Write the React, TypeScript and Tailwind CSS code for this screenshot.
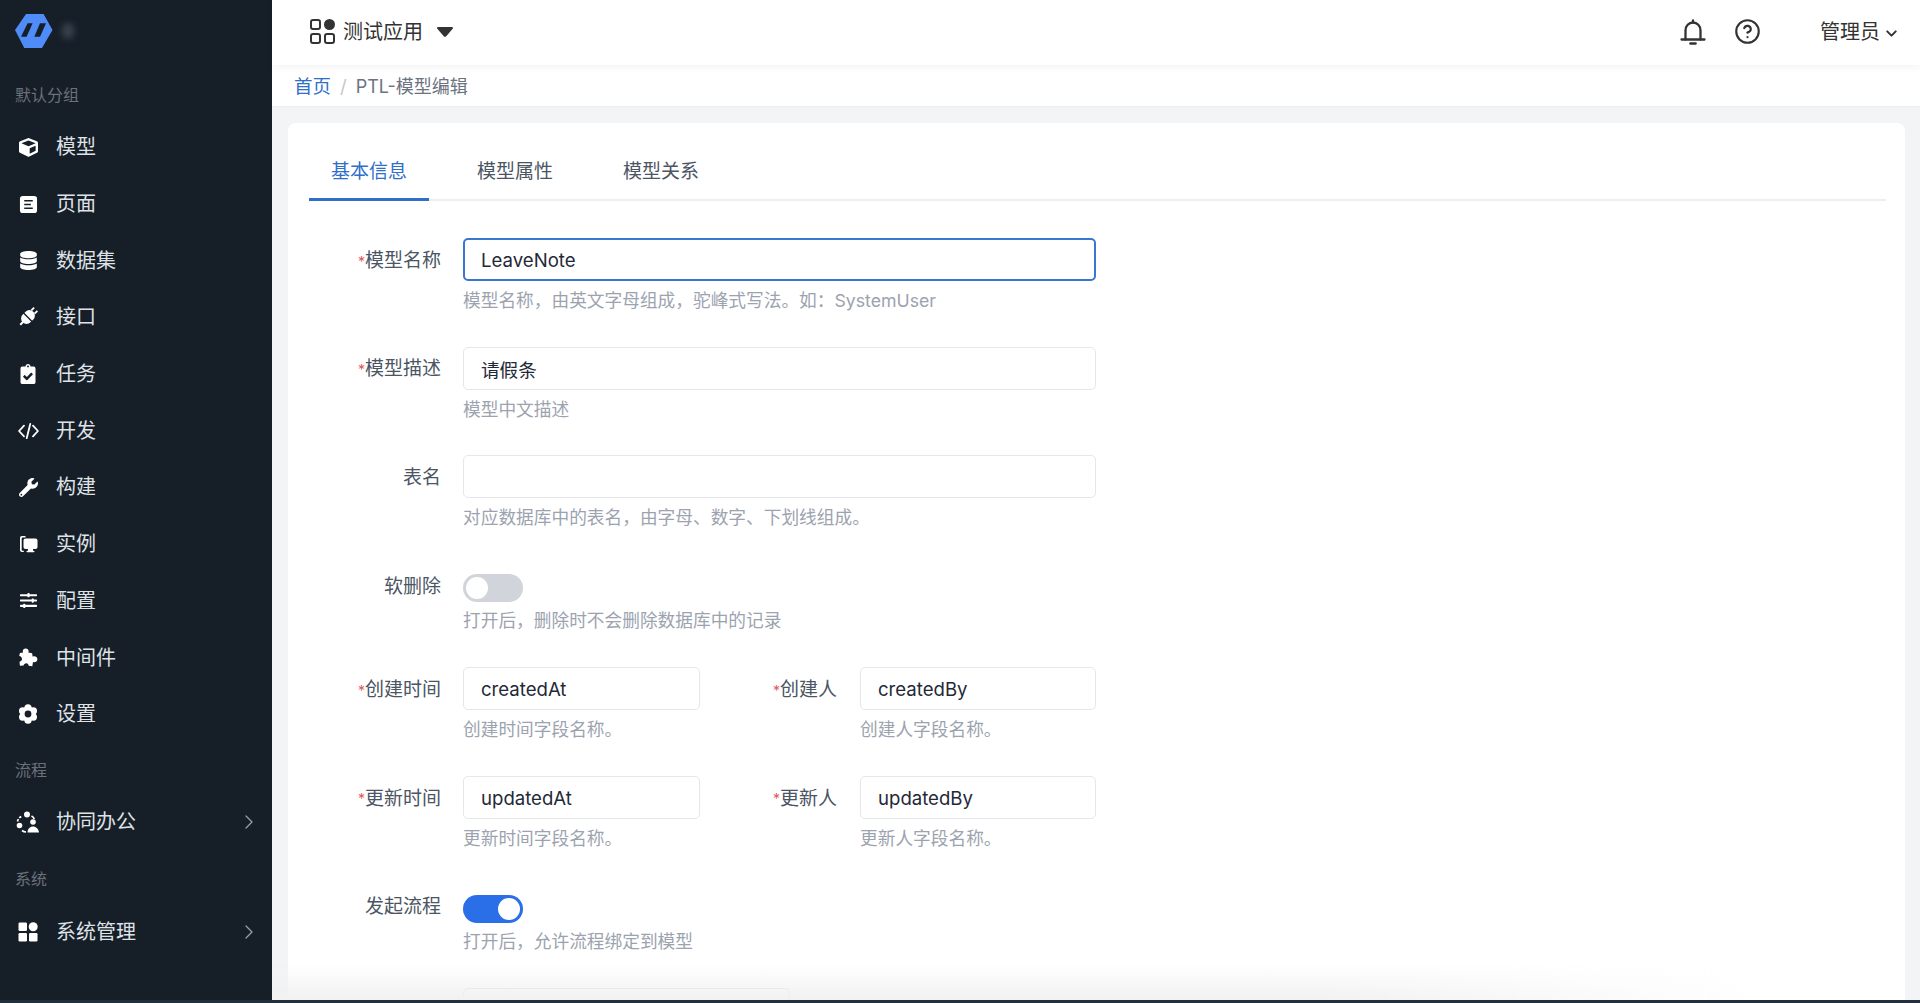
import { ChevronDown, ChevronRight, CircleHelp } from "lucide-react";
import {
  FaClipboardCheck,
  FaCube,
  FaDatabase,
  FaSlidersH,
  FaWrench,
} from "react-icons/fa";

function LogoMark() {
  return (
    <svg viewBox="0 0 38 34" className="-mt-[3px] h-[34px] w-[38px]">
      <polygon points="11,0 28.600,0 37.500,16 27,34 9.300,34 0,16" fill="#4f8cf7" />
      <polygon points="12.600,9.300 17.600,9.300 11.600,22.700 6,22.700" fill="#161e28" />
      <polygon points="25,9.300 31,9.300 25,22.700 19.300,22.700" fill="#161e28" />
    </svg>
  );
}

function PageIcon() {
  return (
    <svg viewBox="0 0 20 20" className="h-[19px] w-[19px]">
      <rect x="1" y="1" width="18" height="18" rx="3" fill="#fff" />
      <path d="M5.500 6h9M5.500 10h7M5.500 14h9" stroke="#161e28" strokeWidth="1.600" />
    </svg>
  );
}

function PlugIcon() {
  return (
    <svg viewBox="0 0 22 22" className="h-[22px] w-[22px]" fill="#fff">
      <g transform="rotate(-45 11 11)">
        <rect x="3.500" y="5.500" width="15" height="11" rx="5.500" />
        <rect x="10" y="4" width="1.400" height="14" fill="#161e28" />
        <rect x="0" y="10" width="4" height="2" />
        <rect x="18" y="7.800" width="4" height="1.800" />
        <rect x="18" y="12.400" width="4" height="1.800" />
      </g>
    </svg>
  );
}

function CodeIcon() {
  return (
    <svg viewBox="0 0 24 20" className="h-[18px] w-[23px]" fill="none" stroke="#fff" strokeWidth="2" strokeLinecap="round" strokeLinejoin="round">
      <path d="M7 4l-5.500 6L7 16M17 4l5.500 6L17 16M14 2l-4 16" />
    </svg>
  );
}

function InstanceIcon() {
  return (
    <svg viewBox="0 0 20 20" className="h-5 w-5" fill="#fff">
      <path d="M2 18V4c0-1.200.8-2 2-2h3.500v1.600H4.400c-.4 0-.7.3-.7.7v11.800c0 .4.3.7.7.7h1.400V18H4c-1.200 0-2-.8-2-2z" />
      <rect x="5.500" y="4.500" width="14" height="10.500" rx="2" />
      <rect x="10" y="15" width="5" height="2" />
      <rect x="8.500" y="16.700" width="8" height="1.500" rx=".7" />
    </svg>
  );
}

function PuzzleIcon() {
  return (
    <svg viewBox="0 0 22 22" className="h-[21px] w-[21px]" fill="#fff">
      <path d="M8 1.500c1.900 0 3.200 1.300 3.200 2.800 0 .6-.2 1-.4 1.500l4 .7.6 3.700c.5-.3 1-.4 1.600-.4 1.800 0 3.300 1.300 3.300 3.100s-1.500 3.200-3.300 3.200c-.5 0-.9-.1-1.300-.3l-.7 4.300-3.800-.5c-.1-1.500-1.200-2.600-2.600-2.600s-2.500 1-2.700 2.400l-3.900.3-.4-4.300c1.500-.1 2.600-1.200 2.600-2.700S2.900 9.500 1.300 9.400L2 6.200l3.400-.5c-.2-.4-.4-.9-.4-1.400C5 2.800 6.200 1.500 8 1.500z" />
    </svg>
  );
}

function FlowerGearIcon() {
  return (
    <svg viewBox="0 0 22 22" className="h-[22px] w-[22px]">
      <g fill="#fff">
        <circle cx="11" cy="11" r="7.500" />
        <circle cx="11" cy="4.800" r="3.600" />
        <circle cx="11" cy="17.200" r="3.600" />
        <circle cx="5.600" cy="7.900" r="3.600" />
        <circle cx="16.400" cy="7.900" r="3.600" />
        <circle cx="5.600" cy="14.100" r="3.600" />
        <circle cx="16.400" cy="14.100" r="3.600" />
      </g>
      <circle cx="11" cy="11" r="3.400" fill="#161e28" />
    </svg>
  );
}

function TeamIcon() {
  return (
    <svg viewBox="0 0 24 22" className="h-[22px] w-[24px]" fill="#fff">
      <circle cx="11" cy="3.500" r="3" />
      <circle cx="3.500" cy="14.500" r="2.800" />
      <path d="M1.500 10.500C2 8 3.500 6.300 5.600 5.200" fill="none" stroke="#fff" strokeWidth="1.700" strokeDasharray="2.500 1.500" />
      <path d="M6 19.500c1.200 1 2.600 1.500 4 1.500" fill="none" stroke="#fff" strokeWidth="1.700" />
      <circle cx="17" cy="11" r="2.800" />
      <path d="M11.500 21.500c0-3.500 2.400-6 5.500-6s5.500 2.500 6 6z" />
      <path d="M15.500 5c1.300.7 2.300 1.800 2.800 3" fill="none" stroke="#fff" strokeWidth="1.700" />
    </svg>
  );
}

function AppsFilledIcon() {
  return (
    <svg viewBox="0 0 20 20" className="h-5 w-5" fill="#fff">
      <rect x="0.500" y="0.500" width="8.500" height="8.500" rx="1.300" />
      <circle cx="15.200" cy="4.800" r="4.500" />
      <rect x="0.500" y="11" width="8.500" height="8.500" rx="1.300" />
      <rect x="11" y="11" width="8.500" height="8.500" rx="1.300" />
    </svg>
  );
}

function AppsOutlineIcon() {
  return (
    <svg viewBox="0 0 25 25" className="h-[25px] w-[25px]">
      <g fill="none" stroke="#333" strokeWidth="2">
        <rect x="1" y="1" width="9" height="9" rx="2" />
        <rect x="1" y="15" width="9" height="9" rx="2" />
        <rect x="15" y="15" width="9" height="9" rx="2" />
      </g>
      <circle cx="19.500" cy="5.500" r="5.500" fill="#333" />
    </svg>
  );
}

function BellIcon() {
  return (
    <svg viewBox="0 0 26 26" className="h-[26px] w-[26px]" fill="none" stroke="#333" strokeWidth="2.300" strokeLinecap="round">
      <path d="M13 1.500v2" />
      <path d="M5.500 20.500v-9c0-4.500 3.300-8 7.500-8s7.500 3.500 7.500 8v9" />
      <path d="M1.500 20.500h23" />
      <path d="M10.500 24.500h5" strokeWidth="2.600" />
    </svg>
  );
}

const menuMain = [
  { label: "模型", icon: <FaCube className="h-[19px] w-[19px]" /> },
  { label: "页面", icon: <PageIcon /> },
  { label: "数据集", icon: <FaDatabase className="h-[19px] w-[19px]" /> },
  { label: "接口", icon: <PlugIcon /> },
  { label: "任务", icon: <FaClipboardCheck className="h-5 w-5" /> },
  { label: "开发", icon: <CodeIcon /> },
  { label: "构建", icon: <FaWrench className="h-[19px] w-[19px]" /> },
  { label: "实例", icon: <InstanceIcon /> },
  { label: "配置", icon: <FaSlidersH className="h-[17px] w-[17px]" /> },
  { label: "中间件", icon: <PuzzleIcon /> },
  { label: "设置", icon: <FlowerGearIcon /> },
];

function MenuItem({ label, icon, arrow }: { label: string; icon: React.ReactNode; arrow?: boolean }) {
  return (
    <div className="flex h-[56.7px] items-center pl-[15px] pr-[11px] text-[20px] text-[#dfe2e6]">
      <span className="flex w-[26px] items-center justify-center text-white">{icon}</span>
      <span className="ml-[15px] flex-1">{label}</span>
      {arrow && <ChevronRight className="h-6 w-6 text-[#9aa0a8]" strokeWidth={1.25} />}
    </div>
  );
}

function GroupLabel({ text, h }: { text: string; h: string }) {
  return <div className={`flex items-end pl-[15px] pb-[12px] text-[16px] leading-6 text-[#6b7179] ${h}`}>{text}</div>;
}

function Sidebar() {
  return (
    <aside className="flex w-[272px] shrink-0 flex-col bg-[#161e28]">
      <div className="flex h-[65px] shrink-0 items-center pl-[15px]">
        <LogoMark />
        <div className="ml-[9px] -mt-[3px] h-4 w-3 rounded-full bg-[#39414c] blur-[3px]" />
      </div>
      <GroupLabel text="默认分组" h="h-[54px]" />
      {menuMain.map((m) => (
        <MenuItem key={m.label} label={m.label} icon={m.icon} />
      ))}
      <GroupLabel text="流程" h="h-[51px]" />
      <MenuItem label="协同办公" icon={<TeamIcon />} arrow />
      <GroupLabel text="系统" h="h-[53px]" />
      <MenuItem label="系统管理" icon={<AppsFilledIcon />} arrow />
    </aside>
  );
}

function Topbar() {
  return (
    <header className="z-10 flex h-[65px] shrink-0 items-center bg-white pb-[2px] pl-[38px] pr-[20px] shadow-[0_2px_8px_rgba(0,0,0,0.05)]">
      <AppsOutlineIcon />
      <span className="ml-2 text-[20px] text-[#333]">测试应用</span>
      <svg viewBox="0 0 16 10" className="ml-[14px] h-[10px] w-4" fill="#333">
        <path d="M1.200 0h13.600c1 0 1.500 1 .9 1.800L9 9.400c-.5.600-1.500.600-2 0L.3 1.800C-.3 1 .2 0 1.200 0z" />
      </svg>
      <div className="flex-1" />
      <BellIcon />
      <CircleHelp className="ml-[28px] h-[27px] w-[27px] text-[#333]" strokeWidth={1.9} />
      <span className="ml-[59px] text-[20px] text-[#333]">管理员</span>
      <ChevronDown className="ml-[3px] mt-1 h-[17px] w-[17px] text-[#333]" strokeWidth={2.75} />
    </header>
  );
}

function Label({ text, required, w }: { text: string; required?: boolean; w: string }) {
  return (
    <label className={`flex h-[43px] shrink-0 items-center justify-end pt-[3px] text-[19px] text-[#4b5563] ${w}`}>
      {required && <span className="text-[14px] text-[#e0565b]">*</span>}
      {text}
    </label>
  );
}

function Hint({ children, tight }: { children: React.ReactNode; tight?: boolean }) {
  return <p className={`text-[17.7px] leading-[26px] text-[#9ca3af] ${tight ? "mt-[1px]" : "mt-[7px]"}`}>{children}</p>;
}

function TextInput({ value, focused }: { value?: string; focused?: boolean }) {
  return (
    <input
      readOnly
      value={value ?? ""}
      className={`block h-[43px] w-full rounded-[5px] bg-white text-[18.6px] text-[#1f2937] outline-none ${
        focused ? "border-2 border-[#3a78cf] px-[16px]" : "border border-[#e5e7eb] px-[17px] pt-[1px]"
      }`}
    />
  );
}

function Switch({ on }: { on?: boolean }) {
  return (
    <div className="flex h-[43px] items-start pt-[10px]">
      <div className={`flex h-7 w-[60px] items-center rounded-full px-[3px] ${on ? "justify-end bg-[#2b6fe8]" : "justify-start bg-[#d1d5db]"}`}>
        <div className="h-[22px] w-[22px] rounded-full bg-white" />
      </div>
    </div>
  );
}

function FullRow({ label, required, hint, value, focused }: { label: string; required?: boolean; hint: string; value?: string; focused?: boolean }) {
  return (
    <div className="mb-[32.6px] flex">
      <Label text={label} required={required} w="w-[132px]" />
      <div className="ml-[22px] w-[633px]">
        <TextInput value={value} focused={focused} />
        <Hint>{hint}</Hint>
      </div>
    </div>
  );
}

function SwitchRow({ label, hint, on }: { label: string; hint: string; on?: boolean }) {
  return (
    <div className="mb-[33.6px] flex">
      <Label text={label} w="w-[132px]" />
      <div className="ml-[22px]">
        <Switch on={on} />
        <Hint tight>{hint}</Hint>
      </div>
    </div>
  );
}

function PairRow({ a, b }: { a: { label: string; value: string; hint: string }; b: { label: string; value: string; hint: string } }) {
  return (
    <div className="mb-[32.6px] flex">
      <Label text={a.label} required w="w-[132px]" />
      <div className="ml-[22px] w-[237px]">
        <TextInput value={a.value} />
        <Hint>{a.hint}</Hint>
      </div>
      <Label text={b.label} required w="w-[137px]" />
      <div className="ml-[23px] w-[236px]">
        <TextInput value={b.value} />
        <Hint>{b.hint}</Hint>
      </div>
    </div>
  );
}

function ModelForm() {
  return (
    <div className="pt-[37px]">
      <FullRow label="模型名称" required value="LeaveNote" focused hint="模型名称，由英文字母组成，驼峰式写法。如：SystemUser" />
      <FullRow label="模型描述" required value="请假条" hint="模型中文描述" />
      <FullRow label="表名" hint="对应数据库中的表名，由字母、数字、下划线组成。" />
      <SwitchRow label="软删除" hint="打开后，删除时不会删除数据库中的记录" />
      <PairRow
        a={{ label: "创建时间", value: "createdAt", hint: "创建时间字段名称。" }}
        b={{ label: "创建人", value: "createdBy", hint: "创建人字段名称。" }}
      />
      <PairRow
        a={{ label: "更新时间", value: "updatedAt", hint: "更新时间字段名称。" }}
        b={{ label: "更新人", value: "updatedBy", hint: "更新人字段名称。" }}
      />
      <SwitchRow label="发起流程" hint="打开后，允许流程绑定到模型" on />
      <div className="ml-[154px] h-[43px] w-[327px] rounded-[5px] border border-[#d9dbe0] bg-white" />
    </div>
  );
}

export default function App() {
  return (
    <div className="flex h-[1003px] w-[1920px] flex-col overflow-hidden bg-[#f3f4f6] font-['Inter','Noto_Sans_CJK_SC',sans-serif]">
      <div className="flex min-h-0 flex-1">
        <Sidebar />
        <div className="relative flex min-w-0 flex-1 flex-col">
          <Topbar />
          {/* Breadcrumb */}
          <div className="flex h-[42px] shrink-0 items-center border-b border-[#eceef0] bg-white pl-[22px] pt-[2px] text-[18.5px]">
            <span className="text-[#2f6fc9]">首页</span>
            <span className="mx-[9px] text-[#c4c7cc]">/</span>
            <span className="text-[18px] text-[#6b7280]">PTL-模型编辑</span>
          </div>
          {/* Card */}
          <div className="ml-4 mr-[15px] mt-4 min-h-0 flex-1 overflow-hidden rounded-t-[8px] bg-white pl-[21px] pr-[19px] pt-[23px]">
            <div className="flex h-[55px] border-b-2 border-[#eceef0] text-[19px] text-[#4b5563]">
              <div className="-mb-[2px] flex w-[120px] items-center justify-center border-b-[3px] border-[#2f6fc9] text-[#2f6fc9]">基本信息</div>
              <div className="ml-[48px] flex items-center">模型属性</div>
              <div className="ml-[70px] flex items-center">模型关系</div>
            </div>
            <ModelForm />
          </div>
          <div className="pointer-events-none absolute bottom-0 left-0 right-[150px] h-[36px] bg-gradient-to-t from-[#f1f1f1] to-transparent [mask-image:linear-gradient(to_right,black_70%,transparent)]" />
        </div>
      </div>
      <div className="h-[3px] shrink-0 bg-[#22303e]" />
    </div>
  );
}
